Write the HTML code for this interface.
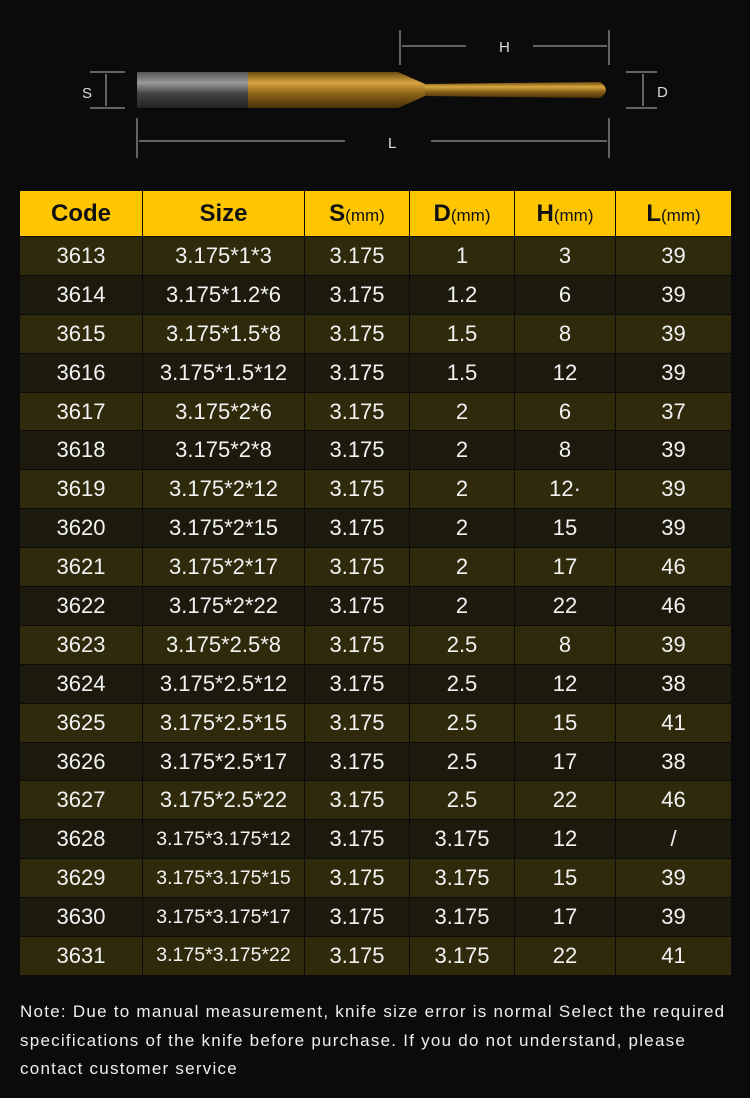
<!DOCTYPE html>
<html><head><meta charset="utf-8"><style>
body{margin:0;width:750px;height:1098px;background:#0b0b0b;font-family:"Liberation Sans",sans-serif;overflow:hidden;position:relative}
table{position:absolute;left:19px;top:190px;border-collapse:collapse;width:712px;table-layout:fixed}
td,th{border:1.5px solid #0b0b0b;text-align:center;color:#f2f2f2;font-size:22px;padding:0;font-weight:normal;white-space:nowrap}
tr{height:38.9px}
tr.h{height:46px}
th{background:#fec600;color:#111;font-weight:bold;font-size:24px}
th small{font-size:17px;font-weight:normal}
tr:nth-child(even) td{background:#2e2a0b}
tr:nth-child(odd) td{background:#1c1a0d}
.note{position:absolute;left:20px;top:998px;width:730px;color:#eee;font-size:17px;line-height:28.5px;white-space:nowrap;letter-spacing:1.25px}
</style></head><body>
<svg width="750" height="185" style="position:absolute;left:0;top:0">
<defs>
<linearGradient id="g" x1="0" y1="0" x2="0" y2="1"><stop offset="0" stop-color="#555"/><stop offset=".3" stop-color="#9a9a9a"/><stop offset=".6" stop-color="#444"/><stop offset="1" stop-color="#222"/></linearGradient>
<linearGradient id="o" x1="0" y1="0" x2="0" y2="1"><stop offset="0" stop-color="#6b4a10"/><stop offset=".3" stop-color="#d9a640"/><stop offset=".6" stop-color="#8a6318"/><stop offset="1" stop-color="#4a3008"/></linearGradient>
</defs>
<g stroke="#bbb" stroke-width="1" fill="none">
<line x1="90" y1="72" x2="125" y2="72"/><line x1="90" y1="108" x2="125" y2="108"/><line x1="106" y1="74" x2="106" y2="106"/>
<line x1="400" y1="30" x2="400" y2="65"/><line x1="609" y1="30" x2="609" y2="65"/>
<line x1="402" y1="46" x2="466" y2="46"/><line x1="533" y1="46" x2="607" y2="46"/>
<line x1="137" y1="118" x2="137" y2="158"/><line x1="609" y1="118" x2="609" y2="158"/>
<line x1="139" y1="141" x2="345" y2="141"/><line x1="431" y1="141" x2="607" y2="141"/>
<line x1="626" y1="72" x2="657" y2="72"/><line x1="626" y1="108" x2="657" y2="108"/><line x1="643" y1="74" x2="643" y2="106"/>
</g>
<text x="82" y="98" fill="#ddd" font-size="15" font-family="Liberation Sans">S</text>
<text x="657" y="97" fill="#ddd" font-size="15" font-family="Liberation Sans">D</text>
<text x="499" y="52" fill="#ddd" font-size="15" font-family="Liberation Sans">H</text>
<text x="388" y="148" fill="#ddd" font-size="15" font-family="Liberation Sans">L</text>
<rect x="137" y="72" width="112" height="36" fill="url(#g)"/>
<rect x="248" y="72" width="150" height="36" fill="url(#o)"/>
<path d="M398 72 L425 84 L425 96 L398 108Z" fill="url(#o)"/>
<path d="M425 84 L600 82 Q612 90 600 98 L425 96Z" fill="url(#o)"/>
</svg>
<table>
<colgroup><col style="width:123px"><col style="width:162px"><col style="width:105px"><col style="width:105px"><col style="width:101px"><col style="width:116px"></colgroup>
<tr class="h"><th>Code</th><th>Size</th><th>S<small>(mm)</small></th><th>D<small>(mm)</small></th><th>H<small>(mm)</small></th><th>L<small>(mm)</small></th></tr>
<tr><td>3613</td><td>3.175*1*3</td><td>3.175</td><td>1</td><td>3</td><td>39</td></tr>
<tr><td>3614</td><td>3.175*1.2*6</td><td>3.175</td><td>1.2</td><td>6</td><td>39</td></tr>
<tr><td>3615</td><td>3.175*1.5*8</td><td>3.175</td><td>1.5</td><td>8</td><td>39</td></tr>
<tr><td>3616</td><td>3.175*1.5*12</td><td>3.175</td><td>1.5</td><td>12</td><td>39</td></tr>
<tr><td>3617</td><td>3.175*2*6</td><td>3.175</td><td>2</td><td>6</td><td>37</td></tr>
<tr><td>3618</td><td>3.175*2*8</td><td>3.175</td><td>2</td><td>8</td><td>39</td></tr>
<tr><td>3619</td><td>3.175*2*12</td><td>3.175</td><td>2</td><td>12·</td><td>39</td></tr>
<tr><td>3620</td><td>3.175*2*15</td><td>3.175</td><td>2</td><td>15</td><td>39</td></tr>
<tr><td>3621</td><td>3.175*2*17</td><td>3.175</td><td>2</td><td>17</td><td>46</td></tr>
<tr><td>3622</td><td>3.175*2*22</td><td>3.175</td><td>2</td><td>22</td><td>46</td></tr>
<tr><td>3623</td><td>3.175*2.5*8</td><td>3.175</td><td>2.5</td><td>8</td><td>39</td></tr>
<tr><td>3624</td><td>3.175*2.5*12</td><td>3.175</td><td>2.5</td><td>12</td><td>38</td></tr>
<tr><td>3625</td><td>3.175*2.5*15</td><td>3.175</td><td>2.5</td><td>15</td><td>41</td></tr>
<tr><td>3626</td><td>3.175*2.5*17</td><td>3.175</td><td>2.5</td><td>17</td><td>38</td></tr>
<tr><td>3627</td><td>3.175*2.5*22</td><td>3.175</td><td>2.5</td><td>22</td><td>46</td></tr>
<tr><td>3628</td><td style="font-size:19.5px">3.175*3.175*12</td><td>3.175</td><td>3.175</td><td>12</td><td>/</td></tr>
<tr><td>3629</td><td style="font-size:19.5px">3.175*3.175*15</td><td>3.175</td><td>3.175</td><td>15</td><td>39</td></tr>
<tr><td>3630</td><td style="font-size:19.5px">3.175*3.175*17</td><td>3.175</td><td>3.175</td><td>17</td><td>39</td></tr>
<tr><td>3631</td><td style="font-size:19.5px">3.175*3.175*22</td><td>3.175</td><td>3.175</td><td>22</td><td>41</td></tr>
</table>
<div class="note">Note: Due to manual measurement, knife size error is normal Select the required<br>specifications of the knife before purchase. If you do not understand, please<br>contact customer service</div>
</body></html>
